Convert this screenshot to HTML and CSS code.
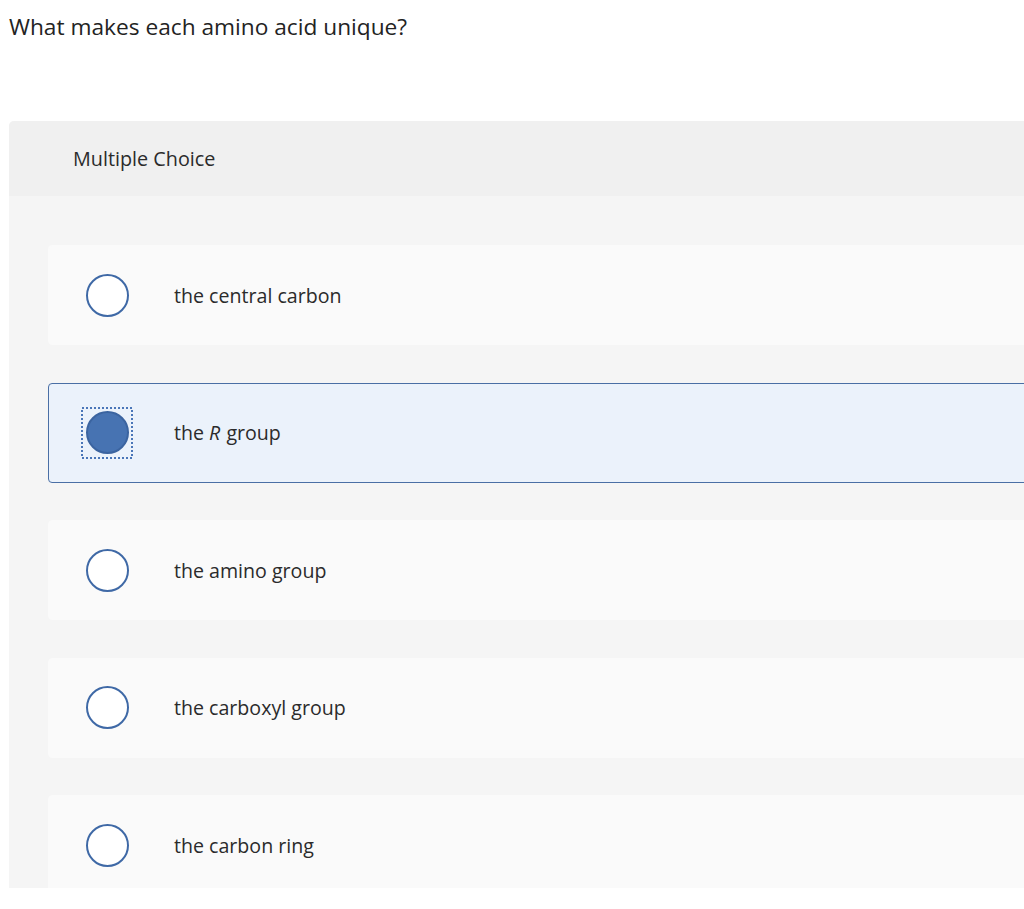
FILE: index.html
```html
<!DOCTYPE html>
<html lang="en">
<head>
<meta charset="utf-8">
<title>What makes each amino acid unique?</title>
<link rel="stylesheet" href="styles.css">
</head>
<body>
<h1 class="question">What makes each amino acid unique?</h1>
<section class="panel">
  <div class="panel-header">Multiple Choice</div>
  <div class="panel-body">
    <div class="choice">
      <span class="radio-wrap"><span class="radio"></span></span>
      <span class="label">the central carbon</span>
    </div>
    <div class="choice selected">
      <span class="radio-wrap">
        <svg class="focus-ring" width="52" height="52" viewBox="0 0 52 52" aria-hidden="true">
          <rect x="1" y="1" width="50" height="50" fill="none" stroke="#4a76b8" stroke-width="2" stroke-dasharray="2 2"/>
        </svg>
        <span class="radio checked"></span>
      </span>
      <span class="label">the <i>R</i> group</span>
    </div>
    <div class="choice">
      <span class="radio-wrap"><span class="radio"></span></span>
      <span class="label">the amino group</span>
    </div>
    <div class="choice">
      <span class="radio-wrap"><span class="radio"></span></span>
      <span class="label">the carboxyl group</span>
    </div>
    <div class="choice">
      <span class="radio-wrap"><span class="radio"></span></span>
      <span class="label">the carbon ring</span>
    </div>
  </div>
</section>
</body>
</html>
```
FILE: styles.css
```css
html, body {
  margin: 0;
  padding: 0;
  background: #ffffff;
  overflow: hidden;
}
body {
  font-family: "Open Sans", "Liberation Sans", sans-serif;
  color: #2b2b2b;
}
.question {
  margin: 0;
  padding: 13px 9px 0;
  font-size: 22.7px;
  font-weight: 400;
  line-height: 28px;
  color: #232323;
}
.panel {
  margin: 80px -40px 0 9px;
  height: 767px;
  overflow: hidden;
  background: #f5f5f5;
  border-radius: 5px 0 0 0;
}
.panel-header {
  height: 75px;
  display: flex;
  align-items: center;
  padding-left: 64px;
  background: #f0f0f0;
  font-size: 19.8px;
}
.panel-body {
  padding: 49px 0 0 39px;
  display: flex;
  flex-direction: column;
  gap: 37.5px;
}
.choice {
  box-sizing: border-box;
  height: 100px;
  display: flex;
  align-items: center;
  padding-left: 32px;
  background: #fafafa;
  border: 1px solid #fafafa;
  border-radius: 4px 0 0 4px;
  font-size: 19.6px;
}
.choice.selected {
  background: #ebf2fb;
  border-color: #4a6fa5;
}
.radio-wrap {
  width: 52px;
  height: 52px;
  flex: none;
  display: grid;
  place-items: center;
}
.radio-wrap > * {
  grid-area: 1 / 1;
}
.focus-ring {
  display: block;
}
.radio {
  box-sizing: border-box;
  width: 43px;
  height: 43px;
  border-radius: 50%;
  border: 2px solid #3f69a6;
  background: #ffffff;
}
.radio.checked {
  background: #4773b2;
  border-color: #3b64a0;
}
.label {
  margin-left: 41px;
}
.label i {
  font-style: italic;
  margin-right: 1px;
}
```
